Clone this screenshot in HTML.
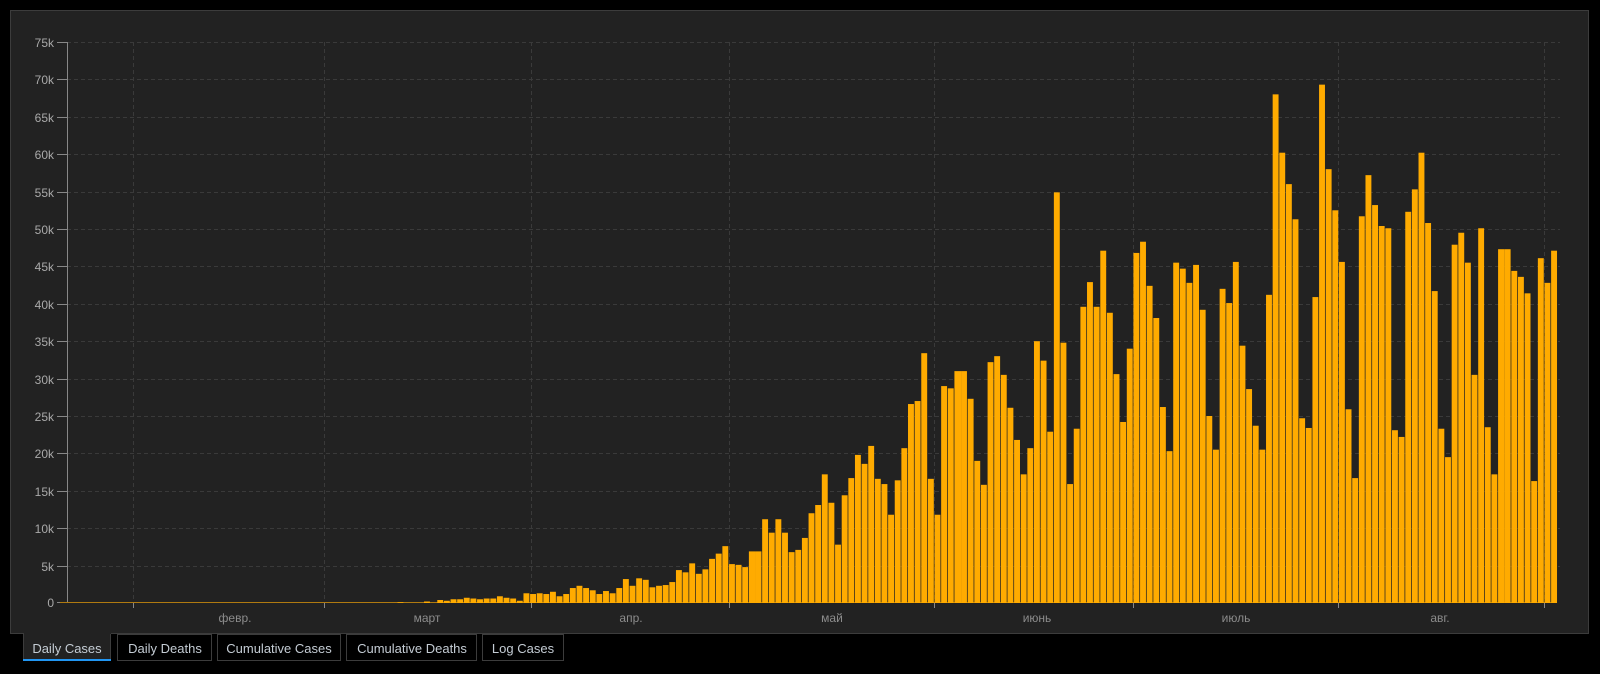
<!DOCTYPE html>
<html><head><meta charset="utf-8"><style>
html,body{margin:0;padding:0;background:#000;width:1600px;height:674px;overflow:hidden}
svg{display:block}
text{font-family:"Liberation Sans",sans-serif}
</style></head><body>
<svg width="1600" height="674" viewBox="0 0 1600 674">
<rect x="0" y="0" width="1600" height="674" fill="#000"/>
<rect x="10.5" y="10.5" width="1578" height="623" fill="#222" stroke="#3c3c3c"/>
<!-- horizontal grid -->
<g stroke="#3a3a3a" stroke-dasharray="4,3" stroke-width="1">
<line x1="67" y1="42.5" x2="1560" y2="42.5"/>
<line x1="67" y1="79.5" x2="1560" y2="79.5"/>
<line x1="67" y1="117.5" x2="1560" y2="117.5"/>
<line x1="67" y1="154.5" x2="1560" y2="154.5"/>
<line x1="67" y1="192.5" x2="1560" y2="192.5"/>
<line x1="67" y1="229.5" x2="1560" y2="229.5"/>
<line x1="67" y1="266.5" x2="1560" y2="266.5"/>
<line x1="67" y1="304.5" x2="1560" y2="304.5"/>
<line x1="67" y1="341.5" x2="1560" y2="341.5"/>
<line x1="67" y1="379.5" x2="1560" y2="379.5"/>
<line x1="67" y1="416.5" x2="1560" y2="416.5"/>
<line x1="67" y1="453.5" x2="1560" y2="453.5"/>
<line x1="67" y1="491.5" x2="1560" y2="491.5"/>
<line x1="67" y1="528.5" x2="1560" y2="528.5"/>
<line x1="67" y1="566.5" x2="1560" y2="566.5"/>
<line x1="133.5" y1="42" x2="133.5" y2="603"/>
<line x1="324.5" y1="42" x2="324.5" y2="603"/>
<line x1="531.5" y1="42" x2="531.5" y2="603"/>
<line x1="729.5" y1="42" x2="729.5" y2="603"/>
<line x1="934.5" y1="42" x2="934.5" y2="603"/>
<line x1="1133.5" y1="42" x2="1133.5" y2="603"/>
<line x1="1338.5" y1="42" x2="1338.5" y2="603"/>
<line x1="1544.5" y1="42" x2="1544.5" y2="603"/>
</g>
<!-- axes -->
<g stroke="#888" stroke-width="1">
<line x1="67.5" y1="42" x2="67.5" y2="603"/>
<line x1="57" y1="42.5" x2="67" y2="42.5"/><line x1="57" y1="79.5" x2="67" y2="79.5"/><line x1="57" y1="117.5" x2="67" y2="117.5"/><line x1="57" y1="154.5" x2="67" y2="154.5"/><line x1="57" y1="192.5" x2="67" y2="192.5"/><line x1="57" y1="229.5" x2="67" y2="229.5"/><line x1="57" y1="266.5" x2="67" y2="266.5"/><line x1="57" y1="304.5" x2="67" y2="304.5"/><line x1="57" y1="341.5" x2="67" y2="341.5"/><line x1="57" y1="379.5" x2="67" y2="379.5"/><line x1="57" y1="416.5" x2="67" y2="416.5"/><line x1="57" y1="453.5" x2="67" y2="453.5"/><line x1="57" y1="491.5" x2="67" y2="491.5"/><line x1="57" y1="528.5" x2="67" y2="528.5"/><line x1="57" y1="566.5" x2="67" y2="566.5"/><line x1="57" y1="602.5" x2="67" y2="602.5"/>
<line x1="133.5" y1="603" x2="133.5" y2="608"/><line x1="324.5" y1="603" x2="324.5" y2="608"/><line x1="531.5" y1="603" x2="531.5" y2="608"/><line x1="729.5" y1="603" x2="729.5" y2="608"/><line x1="934.5" y1="603" x2="934.5" y2="608"/><line x1="1133.5" y1="603" x2="1133.5" y2="608"/><line x1="1338.5" y1="603" x2="1338.5" y2="608"/><line x1="1544.5" y1="603" x2="1544.5" y2="608"/>
</g>
<line x1="60" y1="602.5" x2="1557" y2="602.5" stroke="#b07a10" stroke-width="1"/>
<g fill="#a9a9a9" font-size="12" text-anchor="end">
<text x="54" y="47">75k</text><text x="54" y="84">70k</text><text x="54" y="122">65k</text><text x="54" y="159">60k</text><text x="54" y="197">55k</text><text x="54" y="234">50k</text><text x="54" y="271">45k</text><text x="54" y="309">40k</text><text x="54" y="346">35k</text><text x="54" y="384">30k</text><text x="54" y="421">25k</text><text x="54" y="458">20k</text><text x="54" y="496">15k</text><text x="54" y="533">10k</text><text x="54" y="571">5k</text><text x="54" y="607">0</text>
</g>
<g fill="#8c8c8c" font-size="12" text-anchor="middle">
<text x="235" y="622">февр.</text><text x="427" y="622">март</text><text x="631" y="622">апр.</text><text x="832" y="622">май</text><text x="1037" y="622">июнь</text><text x="1236" y="622">июль</text><text x="1440" y="622">авг.</text>
</g>
<g transform="translate(66,603) scale(6.63,-7.48)" fill="#ffab00">
<rect x="50" width="0.89" height="0.1"/><rect x="54" width="0.89" height="0.2"/><rect x="56" width="0.89" height="0.4"/><rect x="57" width="0.89" height="0.3"/><rect x="58" width="0.89" height="0.5"/><rect x="59" width="0.89" height="0.5"/><rect x="60" width="0.89" height="0.7"/><rect x="61" width="0.89" height="0.6"/><rect x="62" width="0.89" height="0.5"/><rect x="63" width="0.89" height="0.6"/><rect x="64" width="0.89" height="0.6"/><rect x="65" width="0.89" height="0.9"/><rect x="66" width="0.89" height="0.7"/><rect x="67" width="0.89" height="0.6"/><rect x="68" width="0.89" height="0.3"/>
<rect x="69" width="0.89" height="1.3"/><rect x="70" width="0.89" height="1.2"/><rect x="71" width="0.89" height="1.3"/><rect x="72" width="0.89" height="1.2"/><rect x="73" width="0.89" height="1.5"/><rect x="74" width="0.89" height="0.9"/><rect x="75" width="0.89" height="1.2"/><rect x="76" width="0.89" height="2.0"/><rect x="77" width="0.89" height="2.3"/><rect x="78" width="0.89" height="2.0"/><rect x="79" width="0.89" height="1.7"/><rect x="80" width="0.89" height="1.2"/><rect x="81" width="0.89" height="1.6"/><rect x="82" width="0.89" height="1.3"/><rect x="83" width="0.89" height="2.0"/><rect x="84" width="0.89" height="3.2"/><rect x="85" width="0.89" height="2.3"/><rect x="86" width="0.89" height="3.3"/><rect x="87" width="0.89" height="3.1"/><rect x="88" width="0.89" height="2.1"/><rect x="89" width="0.89" height="2.3"/><rect x="90" width="0.89" height="2.4"/><rect x="91" width="0.89" height="2.8"/><rect x="92" width="0.89" height="4.4"/><rect x="93" width="0.89" height="4.1"/><rect x="94" width="0.89" height="5.3"/><rect x="95" width="0.89" height="3.9"/><rect x="96" width="0.89" height="4.5"/><rect x="97" width="0.89" height="5.9"/><rect x="98" width="0.89" height="6.6"/><rect x="99" width="0.89" height="7.6"/>
<rect x="100" width="0.89" height="5.2"/><rect x="101" width="0.89" height="5.1"/><rect x="102" width="0.89" height="4.8"/><rect x="103" width="1" height="6.9"/><rect x="104" width="0.89" height="6.9"/><rect x="105" width="0.89" height="11.2"/><rect x="106" width="0.89" height="9.4"/><rect x="107" width="0.89" height="11.2"/><rect x="108" width="0.89" height="9.4"/><rect x="109" width="0.89" height="6.8"/><rect x="110" width="0.89" height="7.1"/><rect x="111" width="0.89" height="8.7"/><rect x="112" width="0.89" height="12.0"/><rect x="113" width="0.89" height="13.1"/><rect x="114" width="0.89" height="17.2"/><rect x="115" width="0.89" height="13.4"/><rect x="116" width="0.89" height="7.8"/><rect x="117" width="0.89" height="14.4"/><rect x="118" width="0.89" height="16.7"/><rect x="119" width="0.89" height="19.8"/><rect x="120" width="0.89" height="18.6"/><rect x="121" width="0.89" height="21.0"/><rect x="122" width="0.89" height="16.6"/><rect x="123" width="0.89" height="15.9"/><rect x="124" width="0.89" height="11.8"/><rect x="125" width="0.89" height="16.4"/><rect x="126" width="0.89" height="20.7"/><rect x="127" width="0.89" height="26.6"/><rect x="128" width="0.89" height="27.0"/><rect x="129" width="0.89" height="33.4"/>
<rect x="130" width="0.89" height="16.6"/><rect x="131" width="0.89" height="11.8"/><rect x="132" width="0.89" height="29.0"/><rect x="133" width="0.89" height="28.7"/><rect x="134" width="1" height="31.0"/><rect x="135" width="0.89" height="31.0"/><rect x="136" width="0.89" height="27.3"/><rect x="137" width="0.89" height="19.0"/><rect x="138" width="0.89" height="15.8"/><rect x="139" width="0.89" height="32.2"/><rect x="140" width="0.89" height="33.0"/><rect x="141" width="0.89" height="30.5"/><rect x="142" width="0.89" height="26.1"/><rect x="143" width="0.89" height="21.8"/><rect x="144" width="0.89" height="17.2"/><rect x="145" width="0.89" height="20.7"/><rect x="146" width="0.89" height="35.0"/><rect x="147" width="0.89" height="32.4"/><rect x="148" width="0.89" height="22.9"/><rect x="149" width="0.89" height="54.9"/><rect x="150" width="0.89" height="34.8"/><rect x="151" width="0.89" height="15.9"/><rect x="152" width="0.89" height="23.3"/><rect x="153" width="0.89" height="39.6"/><rect x="154" width="0.89" height="42.9"/><rect x="155" width="0.89" height="39.6"/><rect x="156" width="0.89" height="47.1"/><rect x="157" width="0.89" height="38.8"/><rect x="158" width="0.89" height="30.6"/><rect x="159" width="0.89" height="24.2"/>
<rect x="160" width="0.89" height="34.0"/><rect x="161" width="0.89" height="46.8"/><rect x="162" width="0.89" height="48.3"/><rect x="163" width="0.89" height="42.4"/><rect x="164" width="0.89" height="38.1"/><rect x="165" width="0.89" height="26.2"/><rect x="166" width="0.89" height="20.3"/><rect x="167" width="0.89" height="45.5"/><rect x="168" width="0.89" height="44.7"/><rect x="169" width="0.89" height="42.8"/><rect x="170" width="0.89" height="45.2"/><rect x="171" width="0.89" height="39.2"/><rect x="172" width="0.89" height="25.0"/><rect x="173" width="0.89" height="20.5"/><rect x="174" width="0.89" height="42.0"/><rect x="175" width="0.89" height="40.1"/><rect x="176" width="0.89" height="45.6"/><rect x="177" width="0.89" height="34.4"/><rect x="178" width="0.89" height="28.6"/><rect x="179" width="0.89" height="23.7"/><rect x="180" width="0.89" height="20.5"/><rect x="181" width="0.89" height="41.2"/><rect x="182" width="0.89" height="68.0"/><rect x="183" width="0.89" height="60.2"/><rect x="184" width="0.89" height="56.0"/><rect x="185" width="0.89" height="51.3"/><rect x="186" width="0.89" height="24.7"/><rect x="187" width="0.89" height="23.4"/><rect x="188" width="0.89" height="40.9"/><rect x="189" width="0.89" height="69.3"/>
<rect x="190" width="0.89" height="58.0"/><rect x="191" width="0.89" height="52.5"/><rect x="192" width="0.89" height="45.6"/><rect x="193" width="0.89" height="25.9"/><rect x="194" width="0.89" height="16.7"/><rect x="195" width="0.89" height="51.7"/><rect x="196" width="0.89" height="57.2"/><rect x="197" width="0.89" height="53.2"/><rect x="198" width="0.89" height="50.4"/><rect x="199" width="0.89" height="50.1"/><rect x="200" width="0.89" height="23.1"/><rect x="201" width="0.89" height="22.2"/><rect x="202" width="0.89" height="52.3"/><rect x="203" width="0.89" height="55.3"/><rect x="204" width="0.89" height="60.2"/><rect x="205" width="0.89" height="50.8"/><rect x="206" width="0.89" height="41.7"/><rect x="207" width="0.89" height="23.3"/><rect x="208" width="0.89" height="19.5"/><rect x="209" width="0.89" height="47.9"/><rect x="210" width="0.89" height="49.5"/><rect x="211" width="0.89" height="45.5"/><rect x="212" width="0.89" height="30.5"/><rect x="213" width="0.89" height="50.1"/><rect x="214" width="0.89" height="23.5"/><rect x="215" width="0.89" height="17.2"/><rect x="216" width="1" height="47.3"/><rect x="217" width="0.89" height="47.3"/><rect x="218" width="0.89" height="44.4"/><rect x="219" width="0.89" height="43.6"/>
<rect x="220" width="0.89" height="41.4"/><rect x="221" width="0.89" height="16.3"/><rect x="222" width="0.89" height="46.1"/><rect x="223" width="0.89" height="42.8"/><rect x="224" width="0.89" height="47.1"/>
</g>
<!-- tabs -->
<rect x="23" y="633" width="88" height="28" fill="#222"/>
<line x1="23.5" y1="633" x2="23.5" y2="661" stroke="#3c3c3c"/>
<line x1="110.5" y1="634" x2="110.5" y2="661" stroke="#3c3c3c"/>
<rect x="23" y="659" width="88" height="2" fill="#2196f3"/>
<g fill="#000" stroke="#3c3c3c">
<rect x="117.5" y="634.5" width="94" height="26"/>
<rect x="217.5" y="634.5" width="123" height="26"/>
<rect x="346.5" y="634.5" width="130" height="26"/>
<rect x="482.5" y="634.5" width="81" height="26"/>
</g>
<g fill="#c4ccd4" font-size="13" text-anchor="middle">
<text x="67" y="653">Daily Cases</text>
<text x="165" y="653">Daily Deaths</text>
<text x="279" y="653">Cumulative Cases</text>
<text x="412" y="653">Cumulative Deaths</text>
<text x="523" y="653">Log Cases</text>
</g>
</svg>
</body></html>
